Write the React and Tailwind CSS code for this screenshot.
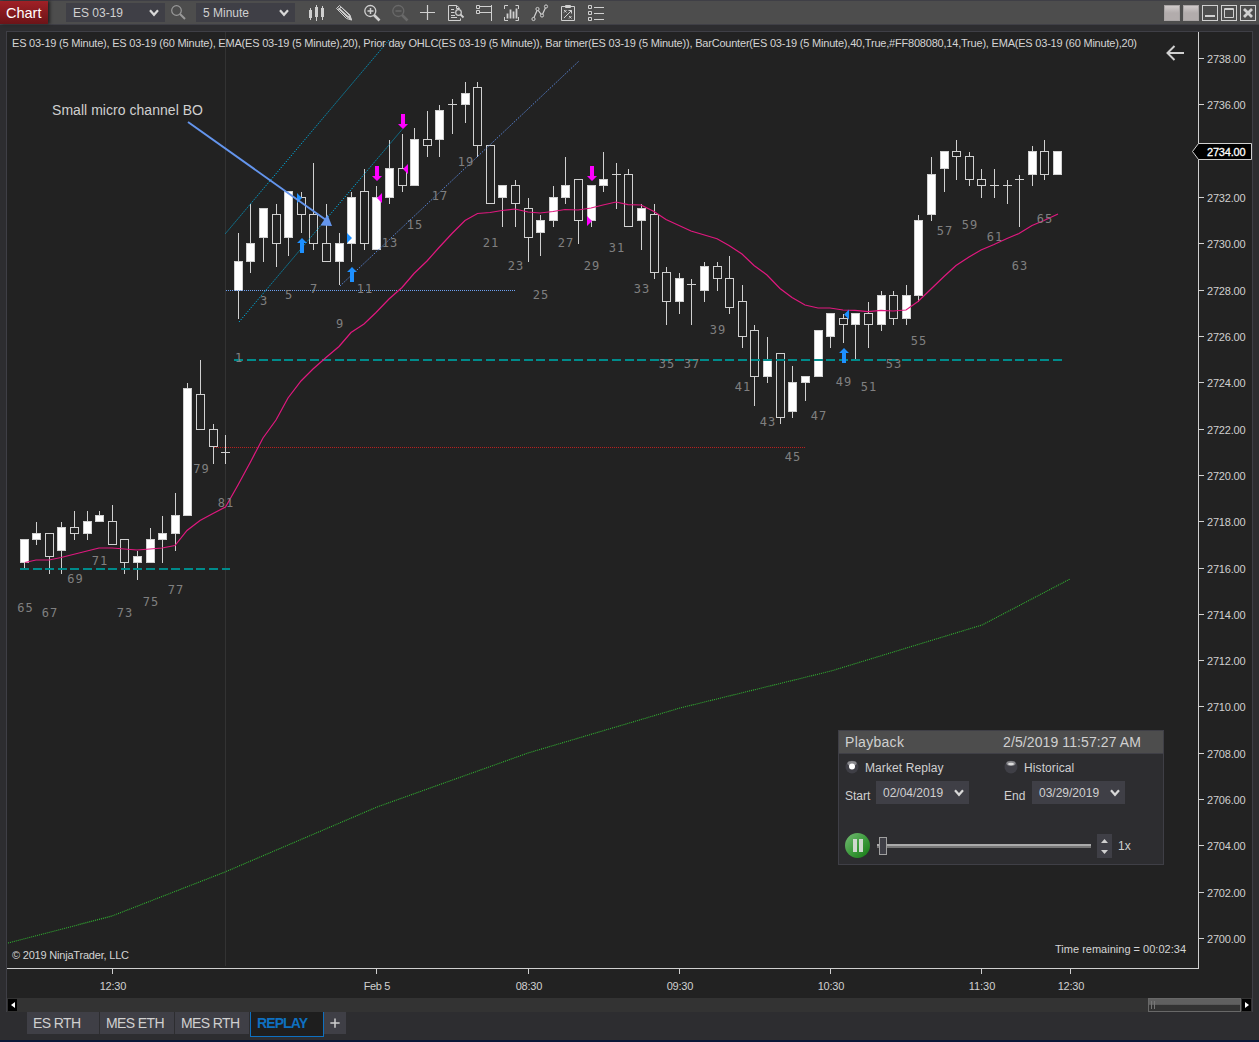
import { FaPlus } from "react-icons/fa6";

// x, high, body top, body bottom, low, type (w = up bar, h = down bar, d = doji)
const candles = [
  [24, 539, 539, 563, 569, 'w'], [36, 522, 533, 540, 545, 'w'], [49, 533, 533, 557, 574, 'h'],
  [61, 522, 527, 551, 574, 'w'], [74, 511, 527, 534, 540, 'h'], [87, 511, 521, 534, 540, 'w'],
  [99, 511, 515, 522, 522, 'w'], [112, 505, 521, 545, 545, 'h'], [124, 539, 539, 563, 574, 'h'],
  [137, 551, 556, 563, 580, 'w'], [150, 528, 539, 563, 563, 'w'], [162, 516, 533, 540, 563, 'w'],
  [175, 493, 515, 534, 551, 'w'], [187, 383, 388, 516, 516, 'w'], [200, 360, 394, 430, 430, 'h'],
  [213, 424, 429, 447, 464, 'h'], [225, 435, 452, 453, 464, 'd'],
  [238, 233, 261, 291, 319, 'w'], [250, 204, 243, 262, 273, 'w'], [263, 208, 208, 238, 262, 'w'],
  [276, 204, 214, 244, 267, 'h'], [288, 191, 191, 238, 256, 'w'], [301, 192, 197, 215, 233, 'h'],
  [313, 163, 214, 244, 250, 'h'], [326, 204, 243, 262, 262, 'h'], [339, 233, 243, 262, 285, 'w'],
  [351, 192, 197, 244, 262, 'w'], [364, 169, 191, 244, 250, 'h'], [376, 186, 197, 250, 250, 'w'],
  [389, 140, 168, 198, 204, 'w'], [402, 134, 168, 186, 192, 'h'], [414, 128, 139, 186, 186, 'w'],
  [427, 111, 139, 146, 157, 'h'], [439, 105, 110, 140, 157, 'w'], [452, 99, 104, 105, 134, 'd'],
  [465, 82, 93, 105, 123, 'w'], [477, 82, 87, 146, 157, 'h'], [490, 145, 145, 204, 204, 'h'],
  [502, 185, 185, 198, 227, 'w'], [515, 180, 185, 204, 227, 'h'], [528, 198, 208, 238, 262, 'h'],
  [540, 215, 220, 233, 256, 'w'], [553, 186, 197, 221, 227, 'w'], [565, 157, 185, 198, 204, 'w'],
  [578, 179, 179, 221, 244, 'h'], [591, 185, 185, 221, 227, 'w'], [603, 152, 179, 186, 192, 'w'],
  [616, 163, 174, 175, 209, 'd'], [628, 169, 174, 227, 227, 'h'], [641, 204, 208, 221, 250, 'w'],
  [654, 204, 214, 273, 279, 'h'], [666, 267, 272, 302, 325, 'h'], [679, 273, 278, 302, 314, 'w'],
  [691, 279, 284, 285, 325, 'd'], [704, 262, 266, 291, 302, 'w'], [717, 262, 266, 279, 291, 'h'],
  [729, 256, 278, 308, 314, 'h'], [742, 285, 301, 337, 348, 'h'], [754, 325, 330, 377, 406, 'h'],
  [767, 337, 359, 377, 383, 'w'], [780, 353, 353, 418, 424, 'h'], [792, 366, 382, 412, 418, 'w'],
  [805, 376, 376, 383, 401, 'w'], [818, 330, 330, 377, 377, 'w'], [830, 313, 313, 337, 348, 'w'],
  [843, 314, 318, 325, 343, 'h'], [855, 313, 313, 325, 360, 'w'], [868, 302, 313, 325, 348, 'h'],
  [881, 291, 295, 325, 331, 'w'], [893, 291, 295, 319, 325, 'h'], [906, 285, 295, 319, 325, 'w'],
  [918, 215, 220, 296, 302, 'w'], [931, 157, 174, 215, 221, 'w'], [944, 151, 151, 169, 192, 'w'],
  [956, 140, 151, 157, 180, 'h'], [969, 152, 156, 180, 186, 'h'], [981, 169, 179, 186, 198, 'h'],
  [994, 169, 185, 186, 198, 'd'], [1007, 180, 185, 186, 204, 'd'], [1019, 175, 179, 180, 227, 'd'],
  [1032, 146, 151, 175, 186, 'w'], [1044, 140, 151, 175, 180, 'h'], [1057, 151, 151, 175, 175, 'w'],
];

// bar number, centre x, middle y
const barNumbers = [
  [65, 25, 608], [67, 49.5, 613], [69, 75, 579], [71, 99.5, 561], [73, 124.5, 613], [75, 150.5, 602],
  [77, 175.5, 590], [79, 201, 469], [81, 225.5, 503], [1, 238.5, 358], [3, 263.5, 301], [5, 288.5, 295],
  [7, 313.5, 289], [9, 339.5, 324], [11, 364.5, 289], [13, 389.5, 243], [15, 414.5, 225], [17, 439.5, 196],
  [19, 465.5, 162], [21, 490.5, 243], [23, 515.5, 266], [25, 540.5, 295], [27, 565.5, 243], [29, 591.5, 266],
  [31, 616.5, 248], [33, 641.5, 289], [35, 666.5, 364], [37, 691.5, 364], [39, 717.5, 330], [41, 742.5, 387],
  [43, 767.5, 422], [45, 792.5, 457], [47, 818.5, 416], [49, 843.5, 382], [51, 868.5, 387], [53, 893.5, 364],
  [55, 918.5, 341], [57, 944.5, 231], [59, 969.5, 225], [61, 994.5, 237], [63, 1019.5, 266], [65, 1044.5, 219],
];

const ema5 =
  "25,562.5 36,560 49,560 61,557.5 99,548 112,548 137,550 150,549 162,548 175,545.5 187,530.5 200,520.5 213,513.5 225.5,507 238,485 251,461 263,438 276,420 288,398 301,381 313,369 326,357.5 339,346.5 351,332.5 364,324 376,312.5 389,299 402,287.5 414,273.5 427,261 439,247.5 452,233.5 465,220.5 477.5,213.5 490,212.5 502,210.5 515,209 528,212 540,213 553,211.5 565,209.5 578,210 591,208 603,205 616,202 628,204.7 641,205 654,211.5 666,219.5 691,231 717,238.7 729,245.5 742,254 754,265.5 767,275 780,288.5 792,297.5 805,305 818,308 830,308 843,310 855,310.3 868,311.6 881,310.3 893,311 906,310 918,301.5 931,289 944,276.5 956,265.5 969,257 981,250 994,244.5 1007,238.5 1019,233.5 1032,225.5 1044,220.5 1058,214";

const ema60 = "8,943 112,916 225,872 377,807 528,753 680,708 831,671 982,625 1070,579";

const prices = Array.from({ length: 20 }, (_, i) => 2738 - i * 2);

const times = [
  ['12:30', 112], ['Feb 5', 376], ['08:30', 528], ['09:30', 679], ['10:30', 830], ['11:30', 981], ['12:30', 1070],
];

const Candle = ({ bar }) => {
  const [x, high, top, bottom, low, type] = bar;
  return (
    <g>
      {high < top && <rect x={x} y={high} width="1" height={top - high} fill="#d0d0d0" />}
      {low > bottom && <rect x={x} y={bottom} width="1" height={low - bottom} fill="#d0d0d0" />}
      {type === 'd' && <rect x={x - 4} y={top} width="9" height="1" fill="#d0d0d0" />}
      {type !== 'd' && (
        <rect x={x - 3.5} y={top + 0.5} width="8" height={bottom - top - 1} fill={type === 'w' ? '#fff' : '#222222'} stroke="#d0d0d0" />
      )}
    </g>
  );
};

const UpArrow = ({ x, y }) => (
  <path d={`M${x} ${y}l5 5h-3v10h-4v-10h-3z`} fill="#1e90ff" />
);

const DownArrow = ({ x, y }) => (
  <path d={`M${x} ${y}l5 -5h-3v-10h-4v10h-3z`} fill="#ff00ff" />
);

const Chart = () => (
  <svg className="block" width="1245" height="966" viewBox="7 32 1245 966" fontFamily="'Liberation Sans', Arial, sans-serif">
    <rect x="225" y="32" width="1" height="934" fill="#333333" />

    {/* bars */}
    <g shapeRendering="crispEdges">
      {candles.map((bar) => <Candle key={bar[0]} bar={bar} />)}
    </g>

    {/* prior day levels */}
    <g shapeRendering="crispEdges">
      <path d="M214 447.5H806" stroke="#b52020" strokeDasharray="1 1" />
      <path d="M226 290.5H516" stroke="#6ea0f0" strokeDasharray="1 1" />
      <path d="M20 569H230M234 360H1062" stroke="#008b8b" strokeWidth="2" strokeDasharray="9 3.6" />
    </g>

    {/* averages */}
    <polyline points={ema5} fill="none" stroke="#e0187f" strokeWidth="1.2" />
    <polyline points={ema60} fill="none" stroke="#32b432" strokeWidth="1.1" strokeDasharray="1 1" />

    {/* channel lines */}
    <path d="M225.5 233.5L389 40M239 322L402.5 129" stroke="#00a8d8" strokeWidth="1" strokeDasharray="1.3 1.3" />
    <path d="M340 286L579 61" stroke="#5a88dc" strokeWidth="1" strokeDasharray="1.3 1.3" />

    {/* bar counter */}
    <g fill="#808080" fontFamily="'DejaVu Sans Mono', Consolas, monospace" fontSize="12" letterSpacing="1" textAnchor="middle">
      {barNumbers.map(([n, x, y]) => <text key={x} x={x + 0.5} y={Math.round(y + 4)}>{n}</text>)}
    </g>

    {/* executions */}
    <UpArrow x={302} y={238} />
    <UpArrow x={352} y={267} />
    <UpArrow x={844} y={348} />
    <DownArrow x={403} y={129} />
    <DownArrow x={377} y={181} />
    <DownArrow x={592} y={181} />
    <path d="M297 193l5 5l-5 5zM347 233l5 5l-5 5zM849 309.500l-5 5l5 5z" fill="#1e90ff" />
    <path d="M382 193l-5 5l5 5zM408 164l-5 5l5 5zM587 216l5 5l-5 5z" fill="#ff00ff" />

    {/* note */}
    <path d="M188 122L326 220" stroke="#6495ed" strokeWidth="2" />
    <path d="M332 226L320.500 225.500L327.500 214.500z" fill="#6495ed" />
    <text x="52" y="115" fontSize="14" fill="#d0d0d0" textLength="151">Small micro channel BO</text>

    <g fontSize="11" fill="#d4d4d4">
      <text x="12" y="47" textLength="1125">
        ES 03-19 (5 Minute), ES 03-19 (60 Minute), EMA(ES 03-19 (5 Minute),20), Prior day OHLC(ES 03-19 (5 Minute)), Bar timer(ES 03-19 (5 Minute)), BarCounter(ES 03-19 (5 Minute),40,True,#FF808080,14,True), EMA(ES 03-19 (60 Minute),20)
      </text>
      <text x="12" y="959" textLength="117">© 2019 NinjaTrader, LLC</text>
      <text x="1055" y="953" textLength="131">Time remaining = 00:02:34</text>
    </g>
    <path d="M1167 53H1184M1174.500 46L1167.500 53L1174.500 60" fill="none" stroke="#d0d0d0" strokeWidth="2" />

    {/* axes */}
    <g shapeRendering="crispEdges" fill="#d0d0d0">
      <rect x="1198" y="32" width="1" height="937" />
      <rect x="7" y="968" width="1192" height="1" />
      {prices.map((p, i) => <rect key={p} x="1199" y={Math.round(58 + i * 46.32)} width="5" height="1" />)}
      {times.map(([, x]) => <rect key={x} x={x} y="969" width="1" height="5" />)}
    </g>
    <g fontSize="11" fill="#d0d0d0">
      {prices.map((p, i) => i !== 2 && (
        <text key={p} x="1207" y={Math.round(63 + i * 46.32)} textLength="38.500">{p}.00</text>
      ))}
      {times.map(([label, x]) => <text key={x} x={x + 1} y="990" textAnchor="middle" textLength="26.500">{label}</text>)}
    </g>
    <path d="M1192.500 151.500L1198.500 143.500H1251.500V159.500H1198.500z" fill="#000" stroke="#d0d0d0" />
    <text x="1207" y="156" fontSize="11" fill="#fff" stroke="#fff" strokeWidth="0.3" textLength="38.500">2734.00</text>
  </svg>
);

const Icon = ({ children, color = "#d0d0d0" }) => (
  <svg className="block shrink-0" width="28" height="23" viewBox="0 0 28 23" fill="none" stroke={color}>{children}</svg>
);

const Chevron = () => (
  <svg width="10" height="8" viewBox="0 0 10 8" fill="none" stroke="#d8d8d8" strokeWidth="2.200"><path d="M1 1.200L5 5.800L9 1.200" /></svg>
);

const Select = ({ label, className }) => (
  <div className={`flex items-center justify-between bg-[#3f3f46] pl-[7px] text-[12px] text-[#d0d0d0] ${className}`}>
    <span>{label}</span>
    <Chevron />
  </div>
);

const WinButton = ({ children }) => (
  <svg width="16" height="16" viewBox="0 0 16 16" fill="none" stroke="#d0d0d0">
    <rect x="0.5" y="0.5" width="15" height="15" />
    {children}
  </svg>
);

const TitleBar = () => (
  <div className="flex h-[25px] items-center border-y border-[#3f3f46] bg-[#4d4d4d]">
    <div className="flex h-[23px] w-[48px] items-center bg-linear-to-b from-[#a02026] to-[#6c1418] pl-[6px] pt-[2px] text-[14.5px] text-white shadow-[2px_0_3px_#222]">Chart</div>
    <Select label="ES 03-19" className="ml-[18px] h-[19px] w-[99px] pr-[6px]" />
    <svg className="ml-[5px]" width="18" height="18" viewBox="0 0 18 18" fill="none" stroke="#999">
      <circle cx="6.500" cy="6.500" r="4.800" strokeWidth="1.200" />
      <path d="M10 10L15 15" strokeWidth="2" />
    </svg>
    <Select label="5 Minute" className="ml-[8px] h-[19px] w-[99px] pr-[6px]" />
    <div className="ml-[7px] flex">
      {/* bars */}
      <Icon>
        <path d="M8.500 7V19M14.500 4V20M20.500 5V19" />
        <path d="M8.500 9V17M14.500 6V16M20.500 7V16" strokeWidth="3" />
      </Icon>
      {/* drawing tools */}
      <Icon>
        <path d="M6.500 7.500L9.500 4.500L20 14L21.500 19L16.500 17.500zM9 8L17.500 16.500M11 6L19.500 14.500M8.500 9L11 6" />
        <path d="M8.500 7.200L18 15.800" strokeWidth="1.600" />
        <path d="M17.500 16L21.500 19L19.500 14.500z" fill="#d0d0d0" />
      </Icon>
      {/* zoom in */}
      <Icon>
        <circle cx="12.300" cy="10" r="5.500" strokeWidth="1.300" />
        <path d="M9.500 10H15.500M12.500 7V13" strokeWidth="1.500" />
        <path d="M16 14L21.500 19.500" strokeWidth="2.600" />
      </Icon>
      {/* zoom out, nothing to undo yet */}
      <Icon color="#696969">
        <circle cx="12.300" cy="10" r="5.500" strokeWidth="1.300" />
        <path d="M9.500 10H15.500" strokeWidth="1.500" />
        <path d="M16 14L21.500 19.500" strokeWidth="2.600" />
      </Icon>
      {/* crosshair */}
      <Icon><path d="M6 11.500H21M13.500 4V19" strokeWidth="1.200" /></Icon>
      {/* data series */}
      <Icon>
        <path d="M17.500 7.500V7L14.500 4.500H6.500V19.500H18.500V17.500M14.500 4.500V7.500H17.500M9 8.500H12M9 11.500H12.500M9 14.500H13M9 16.500H15" />
        <circle cx="16.500" cy="11.500" r="2.800" strokeWidth="1.200" />
        <path d="M18.500 13.500L21.500 16.500" strokeWidth="1.800" />
      </Icon>
      {/* chart trader */}
      <Icon>
        <path d="M6.500 4.500H9.500V7.500H6.500zM6.500 9.500H9.500V12.500H6.500zM9.500 5.500H21.500M9.500 11.500H21.500M21.500 4V20" />
      </Icon>
      {/* data box */}
      <Icon>
        <path d="M6.500 8V4.500H10M17.500 4.500H20.500V8M6.500 16V19.500H10M17.500 19.500H20.500V16" />
        <path d="M9.500 12.500V17.500M12.500 8.500V17.500M15.500 10.500V17.500M18.500 7.500V17.500" strokeWidth="1.800" />
      </Icon>
      {/* indicators */}
      <Icon>
        <path d="M7.500 17.500L11.500 8.500L16 14.500L20 5.500" strokeWidth="1.200" />
        <g fill="#4d4d4d">
          <circle cx="7.500" cy="18" r="1.600" /><circle cx="11.500" cy="8" r="1.600" />
          <circle cx="16" cy="14.500" r="1.600" /><circle cx="20" cy="5.500" r="1.600" />
        </g>
      </Icon>
      {/* strategies */}
      <Icon>
        <path d="M7.500 5.500H20.500V19.500H7.500zM11.500 4.500H16.500V6.500H11.500z" />
        <path d="M10 9L12.500 11.500M12.500 9L10 11.500M15 15L17.500 17.500M17.500 15L15 17.500M10 17L17.500 9.500M14.500 9.500H17.500V12.500" />
      </Icon>
      {/* properties */}
      <Icon>
        <path d="M6.500 4.500H9.500V7.500H6.500zM6.500 10.500H9.500V13.500H6.500zM6.500 16.500H9.500V19.500H6.500zM12 6.500H22M12 12.500H22M12 18.500H22" />
      </Icon>
    </div>
    <div className="ml-auto mr-[3px] flex gap-[3px]">
      <div className="h-4 w-4 border border-[#a8a4a4] bg-linear-to-b from-[#cfcaca] via-[#b2acac] to-[#b2acac]"></div>
      <div className="h-4 w-4 border border-[#a8a4a4] bg-linear-to-b from-[#cfcaca] via-[#b2acac] to-[#b2acac]"></div>
      <WinButton><path d="M3 11H13" strokeWidth="2" /></WinButton>
      <WinButton><path d="M3.500 3.500H12.500V12.500H3.500zM3 4.500H13" /></WinButton>
      <WinButton><path d="M4 4L12 12M12 4L4 12" strokeWidth="2.800" /></WinButton>
    </div>
  </div>
);

const Radio = ({ label, checked }) => (
  <div className="flex h-[16px] items-center gap-[6px]">
    <svg width="14" height="14" viewBox="0 0 14 14">
      <circle cx="7" cy="7" r="6.500" fill="#3f3f46" />
      <ellipse cx="7" cy="3.500" rx="4.600" ry="2.400" fill={checked ? "#88888c" : "#88888c"} />
      {checked ? <circle cx="7" cy="6.500" r="3" fill="#fff" /> : <ellipse cx="7" cy="4" rx="3" ry="1.300" fill="#ddd" />}
    </svg>
    <span className="pt-[2px] tracking-[0.1px]">{label}</span>
  </div>
);

const Playback = () => (
  <div className="absolute left-[831px] top-[698px] h-[135px] w-[326px] border border-[#3f3f46] bg-[#2d2d30] text-[12px] text-[#d0d0d0]">
    <div className="flex h-[23px] items-center border-b border-[#3f3f46] bg-[#4d4d4d] pl-[6px] text-[14px]">
      <span className="w-[158px] tracking-[0.3px]">Playback</span>
      <span className="tracking-[0.1px]">2/5/2019 11:57:27 AM</span>
    </div>
    <div className="grid grid-cols-[159px_1fr] pl-[6px] pt-[5px]">
      <Radio label="Market Replay" checked />
      <Radio label="Historical" />
    </div>
    <div className="grid grid-cols-[159px_1fr] pl-[6px] pt-[6px]">
      <div className="flex gap-[6px]">
        <span className="w-[25px] pt-[6px]">Start</span>
        <Select label="02/04/2019" className="h-[23px] w-[93px] pr-[5px]" />
      </div>
      <div className="flex gap-[6px]">
        <span className="w-[22px] pt-[6px]">End</span>
        <Select label="03/29/2019" className="h-[23px] w-[93px] pr-[5px]" />
      </div>
    </div>
    <div className="flex items-center pl-[6px] pt-[28px]">
      <div className="flex h-[25px] w-[25px] items-center justify-center gap-[2px] rounded-full bg-linear-to-br from-[#74ba74] via-[#3f9c3f] to-[#0f780f]">
        <div className="h-[13px] w-[4px] bg-[#d0d8d0]"></div>
        <div className="h-[13px] w-[4px] bg-[#d0d8d0]"></div>
      </div>
      <svg className="ml-[6px]" width="216" height="20" viewBox="0 0 216 20">
        <rect x="1" y="8" width="214" height="4" fill="#777" />
        <rect x="1" y="8" width="214" height="2" fill="#aaa" />
        <rect x="3.500" y="1.500" width="7" height="17" fill="#3f3f46" stroke="#a0a0a0" />
      </svg>
      <svg className="ml-[5px]" width="15" height="24" viewBox="0 0 15 24">
        <rect width="15" height="24" fill="#3f3f46" />
        <path d="M4 9L7.500 5L11 9zM4 16L7.500 20L11 16z" fill="#d0d0d0" />
      </svg>
      <span className="ml-[6px]">1x</span>
    </div>
  </div>
);

const ScrollBar = () => (
  <div className="flex h-[14px] items-center bg-[#333333] px-[1px]">
    <div className="flex h-[12px] w-[9px] items-center justify-center bg-black">
      <svg width="4" height="6" viewBox="0 0 4 6"><path d="M4 0V6L0 3z" fill="#fff" /></svg>
    </div>
    <div className="ml-auto flex h-[14px] w-[93px] items-center gap-[2px] border border-[#686868] bg-linear-to-b from-[#606060] from-45% to-[#333] to-50% pl-[2px]">
      <div className="h-[8px] w-px bg-[#777]"></div>
      <div className="h-[8px] w-px bg-[#777]"></div>
    </div>
    <div className="ml-[1px] flex h-[12px] w-[9px] items-center justify-center bg-black">
      <svg width="4" height="6" viewBox="0 0 4 6"><path d="M0 0V6L4 3z" fill="#fff" /></svg>
    </div>
  </div>
);

const Tabs = () => (
  <div className="flex items-start pl-[27px] text-[14px] leading-[22px] tracking-[-0.6px] text-[#d0d0d0]">
    <div className="mr-px h-[22px] w-[72px] bg-[#3f3f46] pl-[6px]">ES RTH</div>
    <div className="mr-px h-[22px] w-[74px] bg-[#3f3f46] pl-[6px]">MES ETH</div>
    <div className="mr-px h-[22px] w-[74px] bg-[#3f3f46] pl-[6px]">MES RTH</div>
    <div className="h-[25px] w-[74px] border border-t-0 border-[#0e70c0] bg-[#1e1e1e] pl-[6px] font-bold tracking-[-0.9px] text-[#0e70c0]">REPLAY</div>
    <div className="flex h-[22px] w-[22px] items-center justify-center bg-[#3f3f46]"><FaPlus size={12} /></div>
  </div>
);

const App = () => {
  return (
    <div className="flex h-[1042px] w-[1259px] flex-col overflow-hidden bg-[#2d2d30] font-['Liberation_Sans',Arial,sans-serif]">
      <TitleBar />
      <div className="relative ml-[6px] mt-[6px] w-[1247px] border border-b-0 border-[#3f3f46] bg-[#222222]">
        <Chart />
        <Playback />
        <ScrollBar />
      </div>
      <Tabs />
      <div className="mt-auto h-[2px] bg-[#0a1838]"></div>
    </div>
  );
};

export default App;
